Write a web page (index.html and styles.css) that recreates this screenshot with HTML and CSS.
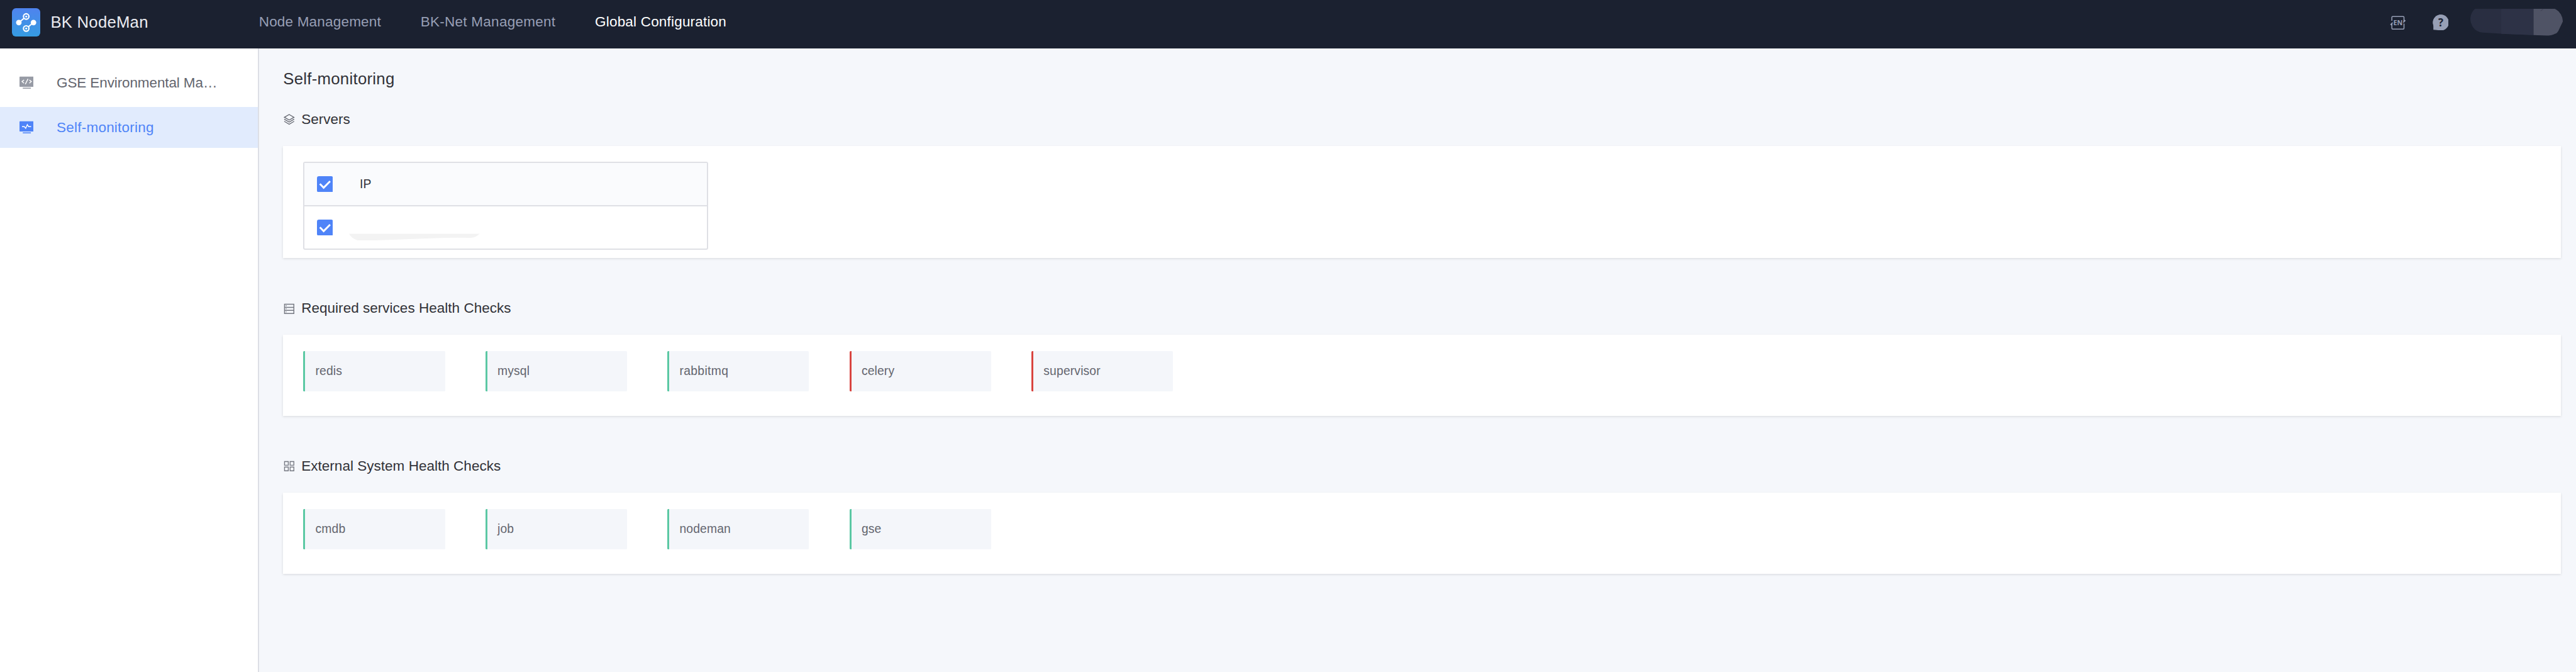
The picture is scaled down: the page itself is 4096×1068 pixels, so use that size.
FILE: index.html
```html
<!DOCTYPE html>
<html lang="en">
<head>
<meta charset="utf-8">
<title>BK NodeMan</title>
<link rel="stylesheet" href="styles.css">
</head>
<body>
<header class="header">
  <div class="brand">
    <svg class="logo" viewBox="0 0 56 56">
      <defs><linearGradient id="lg" x1="0" y1="0" x2="0" y2="1"><stop offset="0" stop-color="#4f83ee"/><stop offset="1" stop-color="#359ce1"/></linearGradient></defs>
      <rect width="56" height="56" rx="8" fill="url(#lg)"/>
      <g stroke="#fff" fill="none">
        <path d="M14 28.3 23.5 20.2M42.5 28.3 33 36.4" stroke-width="2.4"/>
        <circle cx="28.2" cy="16.5" r="5.4" stroke-width="2.7"/>
        <circle cx="28.2" cy="40.2" r="5.4" stroke-width="2.7"/>
      </g>
      <g fill="#fff"><circle cx="13.6" cy="28.4" r="5.5"/><circle cx="42.6" cy="28.4" r="5.5"/><circle cx="28.2" cy="16.5" r="1.9"/><circle cx="28.2" cy="40.2" r="1.9"/></g>
    </svg>
    <span class="brand-name">BK NodeMan</span>
  </div>
  <nav class="nav">
    <a class="nav-item">Node Management</a>
    <a class="nav-item nav-item-wide">BK-Net Management</a>
    <a class="nav-item nav-item-active">Global Configuration</a>
  </nav>
  <div class="tools">
    <svg class="lang" viewBox="0 0 32 32">
      <g fill="none" stroke="#979fb5" stroke-width="1.9">
        <path d="M4 12.5V5.500Q4 4 5.500 4H26.500Q28 4 28 5.500V13"/>
        <path d="M4 18V27Q4 28.900 5.500 28.900H26.500Q28 28.900 28 27V18"/>
      </g>
      <path d="M28 10 31.500 12.200 26.500 17.500V14ZM4 22 .5 19.800 5.500 14.500V18Z" fill="#979fb5"/>
      <text class="lang-text" x="16" y="21.200" text-anchor="middle">EN</text>
    </svg>
    <svg class="help" viewBox="0 0 32 32">
      <path d="M1.500 30.200V21A15.700 15.700 0 1 1 12 31Z" fill="#979fb5"/><circle cx="16.200" cy="16" r="15.700" fill="#979fb5"/>
      <text class="help-text" x="16.200" y="23.600" text-anchor="middle">?</text>
    </svg>
    <svg class="user" viewBox="0 0 184 54">
      <path d="M9 0H125V52L66 49.500 24 47Q12 46 5 36 0 28 0 19 1 7 9 0Z" fill="#292e41"/>
      <path d="M61 0H125V52L61 49.300Z" fill="#2d3246"/>
      <path d="M125 0H167Q174 3 179 11 183 18 183 25L174 44Q172 48 168 49 160 53 150 53L125 51.800Z" fill="#4f5365"/>
      <path d="M139 4 144 1" stroke="#33374a" stroke-width=".8"/>
    </svg>
  </div>
</header>
<div class="body">
  <aside class="sidebar">
    <a class="menu-item">
      <svg class="menu-icon" viewBox="0 0 28 26">
        <rect y="1" width="28" height="20.300" rx="1" fill="#979ba5"/>
        <rect x="6.500" y="22.800" width="16" height="2" fill="#979ba5"/>
        <path d="M9 7.500 5 10.700 9 14M19.500 7.500 23.500 10.700 19.500 14M16.800 5.500 11.500 16" fill="none" stroke="#fff" stroke-width="1.700"/>
      </svg>
      <span class="menu-text">GSE Environmental Ma…</span>
    </a>
    <a class="menu-item menu-item-active">
      <svg class="menu-icon" viewBox="0 0 28 26">
        <rect y="1" width="28" height="20.300" rx="1" fill="#4f84f8"/>
        <rect x="6.500" y="22.800" width="16" height="2" fill="#4f84f8"/>
        <path d="M5 11.500H9.500L12.300 14.800 15.500 7.500 18 11.500H23" fill="none" stroke="#fff" stroke-width="1.700"/>
      </svg>
      <span class="menu-text menu-text-loose">Self-monitoring</span>
    </a>
  </aside>
  <main class="main">
    <h1 class="title">Self-monitoring</h1>
    <section class="section">
      <h2 class="section-title">
        <svg class="section-icon" viewBox="0 0 22 22"><path d="M11 1.200 20.500 6.700 11 12.200 1.500 6.700ZM1.200 10.400 11 16.200 20.800 10.400M1.200 14.700 11 20.500 20.800 14.700" fill="none" stroke="#62656e" stroke-width="1.600"/></svg>
        Servers
      </h2>
      <div class="card card-table">
        <div class="table">
          <div class="row row-head">
            <svg class="check" viewBox="0 0 32 32"><rect width="32" height="32" rx="4" fill="#4f84f8"/><path d="M5.800 15.200 13.200 22.800 26 10" fill="none" stroke="#fff" stroke-width="3.600"/></svg>
            <span class="cell">IP</span>
          </div>
          <div class="row">
            <svg class="check" viewBox="0 0 32 32"><rect width="32" height="32" rx="4" fill="#4f84f8"/><path d="M5.800 15.200 13.200 22.800 26 10" fill="none" stroke="#fff" stroke-width="3.600"/></svg>
            <svg class="masked" viewBox="0 0 258 52"><path d="M0 38H258Q251 46 240 46 200 45.500 170 46.500L26 52Q8 52 0 38Z" fill="#f3f3f3"/></svg>
          </div>
        </div>
      </div>
    </section>
    <section class="section">
      <h2 class="section-title">
        <svg class="section-icon" viewBox="0 0 22 22"><path d="M1.800 1.800H20.200V20.200H1.800ZM1.800 8H20.200M1.800 14H20.200" fill="none" stroke="#767982" stroke-width="1.800"/><path d="M4 4.800H6M4 11H6M4 17H6" stroke="#767982" stroke-width="1.300"/></svg>
        Required services Health Checks
      </h2>
      <div class="card">
        <div class="tile">redis</div>
        <div class="tile">mysql</div>
        <div class="tile tile-loose">rabbitmq</div>
        <div class="tile tile-error">celery</div>
        <div class="tile tile-error">supervisor</div>
      </div>
    </section>
    <section class="section">
      <h2 class="section-title">
        <svg class="section-icon" viewBox="0 0 22 22"><path d="M1.800 1.800H9.200V9.200H1.800ZM12.800 1.800H20.200V9.200H12.800ZM1.800 12.800H9.200V20.200H1.800ZM12.800 12.800H20.200V20.200H12.800Z" fill="none" stroke="#767982" stroke-width="1.700"/></svg>
        External System Health Checks
      </h2>
      <div class="card">
        <div class="tile">cmdb</div>
        <div class="tile">job</div>
        <div class="tile">nodeman</div>
        <div class="tile">gse</div>
      </div>
    </section>
  </main>
</div>
</body>
</html>
```

FILE: styles.css
```css
html {
  font-size: 80.41px;
}

* {
  box-sizing: border-box;
}

body {
  margin: 0;
  height: 100vh;
  display: flex;
  flex-direction: column;
  overflow: hidden;
  background: #f5f7fb;
  font-family: "Liberation Sans", Arial, sans-serif;
  font-size: 0.28rem;
  color: #313238;
}

svg {
  display: block;
  flex: none;
}

.header {
  flex: none;
  display: flex;
  align-items: center;
  height: 0.96rem;
  padding: 0 0.25rem 0.08rem 0.24rem;
  background: #1b2130;
}

.brand {
  display: flex;
  align-items: center;
  gap: 0.2rem;
  width: 4.88rem;
}

.logo {
  width: 0.56rem;
  height: 0.56rem;
}

.brand-name {
  font-size: 0.32rem;
  letter-spacing: 0.009em;
  color: #eaebf0;
}

.nav {
  display: flex;
  gap: 0.78rem;
}

.nav-item {
  letter-spacing: 0.0085em;
  color: #979fb5;
}

.nav-item-wide {
  letter-spacing: 0.012em;
}

.nav-item-active {
  color: #fff;
}

.tools {
  display: flex;
  align-items: center;
  margin-left: auto;
}

.lang {
  width: 0.32rem;
  height: 0.32rem;
  margin-right: 0.52rem;
}

.lang-text {
  font: bold 13.5px "Open Sans", sans-serif;
  fill: #979fb5;
}

.help {
  width: 0.32rem;
  height: 0.32rem;
  margin-right: 0.43rem;
}

.help-text {
  font: bold 21px "Open Sans", sans-serif;
  fill: #1b2130;
}

.user {
  width: 1.84rem;
  height: 0.54rem;
}

.body {
  flex: 1;
  display: flex;
}

.sidebar {
  flex: none;
  display: flex;
  flex-direction: column;
  gap: 0.08rem;
  width: 5.12rem;
  padding-top: 0.28rem;
  background: #fff;
  border-right: 2px solid #dddfe6;
}

.menu-item {
  display: flex;
  align-items: center;
  gap: 0.46rem;
  height: 0.8rem;
  padding-left: 0.38rem;
  color: #63656e;
}

.menu-item-active {
  background: #e1ebfd;
  color: #4f84f8;
}

.menu-icon {
  width: 0.28rem;
  height: 0.26rem;
}

.menu-text {
  letter-spacing: -0.005em;
}

.menu-text-loose {
  letter-spacing: 0.01em;
}

.main {
  flex: 1;
  padding: 0.38rem 0.3rem 0 0.48rem;
}

.title {
  margin: 0 0 0.38rem;
  font-size: 0.32rem;
  font-weight: 400;
  line-height: 0.44rem;
  letter-spacing: 0.011em;
}

.section {
  margin-bottom: 0.8rem;
}

.section-title {
  display: flex;
  align-items: center;
  gap: 0.13rem;
  height: 0.4rem;
  margin: 0 0 0.32rem;
  padding-left: 0.01rem;
  font-size: 0.28rem;
  font-weight: 400;
  letter-spacing: 0.001em;
}

.section-icon {
  width: 0.22rem;
  height: 0.22rem;
}

.card {
  display: flex;
  gap: 0.8rem;
  padding: 0.32rem 0.4rem 0.48rem;
  background: #fff;
  box-shadow: 0 0.02rem 0.05rem rgba(0, 0, 0, 0.13);
}

.card-table {
  padding-bottom: 0.16rem;
}

.table {
  display: flex;
  flex-direction: column;
  width: 8rem;
  height: 1.74rem;
  border: 2px solid #dfe0e5;
  border-radius: 0.04rem;
}

.row {
  flex: 1;
  display: flex;
  align-items: center;
  padding-left: 0.24rem;
}

.row-head {
  flex: none;
  height: 0.855rem;
  background: #fafbfd;
  border-bottom: 2px solid #dfe0e5;
}

.check {
  width: 0.32rem;
  height: 0.32rem;
}

.cell {
  margin-left: 0.53rem;
  font-size: 0.24rem;
}

.masked {
  width: 2.58rem;
  height: 0.52rem;
  margin-left: 0.32rem;
}

.tile {
  width: 2.8rem;
  height: 0.8rem;
  padding-left: 0.2rem;
  border-left: 3px solid #5bc8a3;
  border-radius: 0.02rem;
  background: #f4f6fa;
  font-size: 0.24rem;
  line-height: 0.8rem;
  letter-spacing: 0.008em;
  color: #63656e;
}

.tile-loose {
  letter-spacing: 0.018em;
}

.tile-error {
  border-left-color: #d9443f;
}
```
